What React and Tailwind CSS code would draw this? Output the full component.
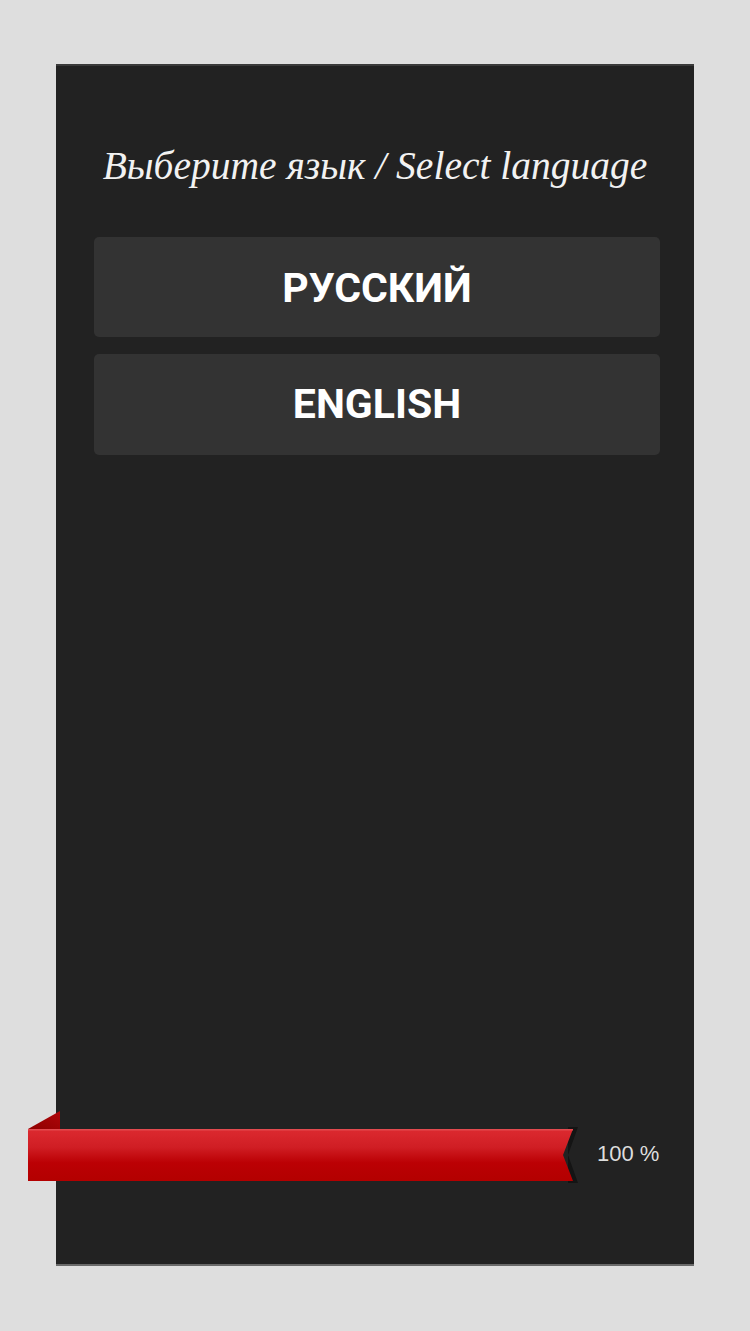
import React from "react";

function Ribbon() {
  return (
    <svg width="560" height="72" viewBox="0 0 560 72" className="block shrink-0">
      <defs>
        <linearGradient id="rg" x1="0" y1="0" x2="0" y2="1">
          <stop offset="0" stopColor="#dc2a30" />
          <stop offset="0.35" stopColor="#d01e24" />
          <stop offset="0.65" stopColor="#bb0004" />
          <stop offset="1" stopColor="#b30000" />
        </linearGradient>
        <linearGradient id="fg" x1="0" y1="1" x2="1" y2="0">
          <stop offset="0" stopColor="#8e0000" />
          <stop offset="1" stopColor="#b0060a" />
        </linearGradient>
      </defs>
      <polygon points="0,18 32,0 32,18" fill="url(#fg)" />
      <polygon points="540,16 550,16 540,44 550,72 540,72" fill="#141414" />
      <polygon points="0,18 545,18 535,44 545,70 0,70" fill="url(#rg)" />
      <rect x="0" y="18" width="545" height="1.5" fill="#e34a4f" />
    </svg>
  );
}

export default function App() {
  return (
    <div className="min-h-[1331px] w-[750px] bg-[#dedede] pt-[64px]">
      <div className="ml-[56px] flex h-[1202px] w-[638px] flex-col border-t-2 border-b-2 border-t-[#3a3a3a] border-b-[#6a6a6a] bg-[#222222]">
        <div
          className="mt-[76px] text-center text-[39.5px] italic leading-[48px] text-[#f2f2f2]"
          style={{ fontFamily: '"Liberation Serif", "DejaVu Serif", serif' }}
        >
          Выберите язык / Select language
        </div>
        <div
          className="ml-[38px] mt-[47px] flex w-[566px] flex-col gap-[17px]"
          style={{ fontFamily: 'Roboto, "Liberation Sans", sans-serif' }}
        >
          <div className="flex h-[100px] items-center justify-center rounded-[5px] bg-[#333333] pt-[4px] text-[41px] font-bold text-white">
            РУССКИЙ
          </div>
          <div className="flex h-[101px] items-center justify-center rounded-[5px] bg-[#333333] text-[41px] font-bold text-white">
            ENGLISH
          </div>
        </div>
        <div className="mt-auto mb-[81px] -ml-[28px] flex items-center">
          <Ribbon />
          <span
            className="ml-[9px] mt-[12px] text-[22px] text-[#dddddd]"
            style={{ fontFamily: '"Liberation Sans", Arial, sans-serif' }}
          >
            100 %
          </span>
        </div>
      </div>
    </div>
  );
}
